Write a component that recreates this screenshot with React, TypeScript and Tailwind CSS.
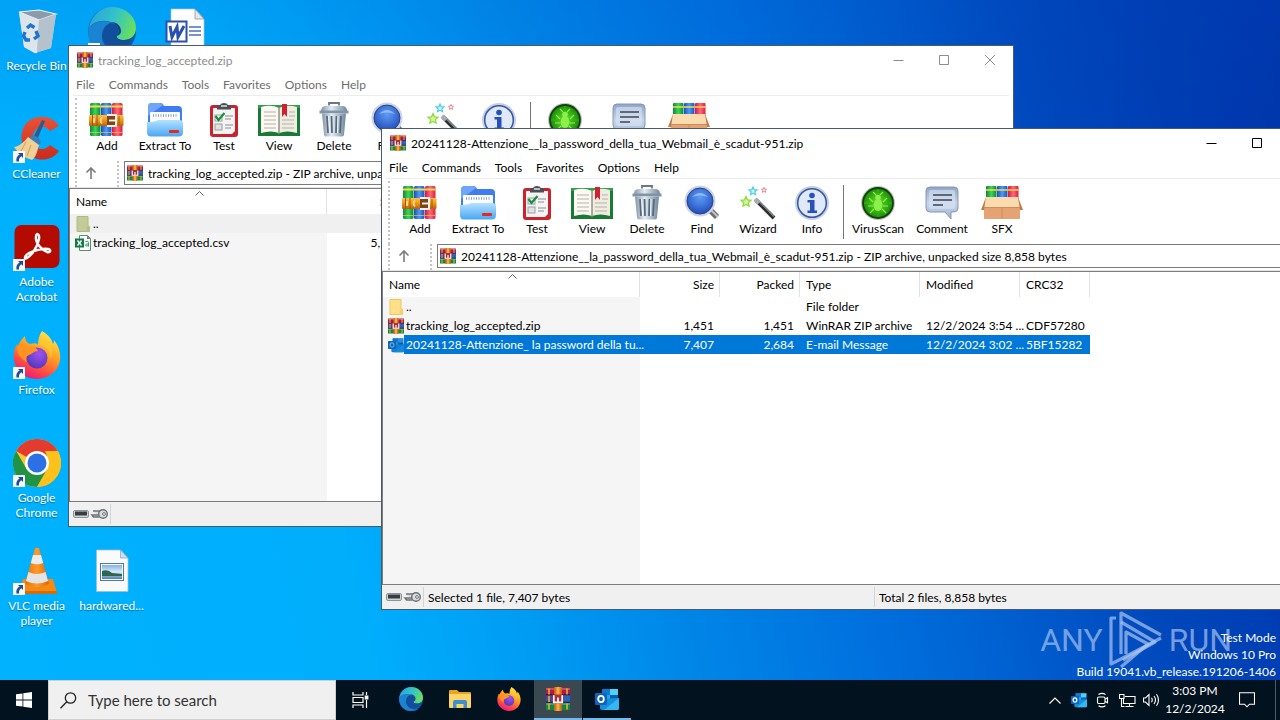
import type { ReactNode } from 'react';
import clsx from 'clsx';

type Row = {
  icon: ReactNode;
  name: string;
  cells: string[];
  state?: 'selected' | 'hover';
};

type ArchiveWindowProps = {
  title: string;
  address: string;
  rows: Row[];
  active?: boolean;
  status?: [string, string];
  className: string;
};

/* ---------- shared gradients ---------- */

function Gradients() {
  return (
    <svg className="absolute h-0 w-0" aria-hidden="true">
      <defs>
        <linearGradient id="green" x1="0" x2="1" y1="0" y2="0">
          <stop offset="0" stopColor="#0a8a3c" />
          <stop offset="0.5" stopColor="#3fd35c" />
          <stop offset="1" stopColor="#0b8a35" />
        </linearGradient>
        <linearGradient id="blue" x1="0" x2="1" y1="0" y2="0">
          <stop offset="0" stopColor="#1c4fb8" />
          <stop offset="0.5" stopColor="#4c9bf5" />
          <stop offset="1" stopColor="#1d51bd" />
        </linearGradient>
        <linearGradient id="red" x1="0" x2="1" y1="0" y2="0">
          <stop offset="0" stopColor="#d01840" />
          <stop offset="0.5" stopColor="#ff6a7c" />
          <stop offset="1" stopColor="#d71f40" />
        </linearGradient>
        <linearGradient id="belt" x1="0" x2="0" y1="0" y2="1">
          <stop offset="0" stopColor="#f9c24a" />
          <stop offset="0.5" stopColor="#ee9415" />
          <stop offset="1" stopColor="#b5620c" />
        </linearGradient>
        <linearGradient id="folder" x1="0" x2="0" y1="0" y2="1">
          <stop offset="0" stopColor="#b5e2ff" />
          <stop offset="1" stopColor="#4aa6f3" />
        </linearGradient>
        <linearGradient id="steel" x1="0" x2="1" y1="0" y2="0">
          <stop offset="0" stopColor="#8395a8" />
          <stop offset="0.4" stopColor="#e4ecf3" />
          <stop offset="1" stopColor="#71879c" />
        </linearGradient>
        <linearGradient id="bubble" x1="0" x2="0" y1="0" y2="1">
          <stop offset="0" stopColor="#8fa5c8" />
          <stop offset="0.5" stopColor="#c7d5ea" />
          <stop offset="1" stopColor="#9fb4d3" />
        </linearGradient>
        <radialGradient id="lens" cx="0.5" cy="0.35" r="0.7">
          <stop offset="0" stopColor="#5f9df5" />
          <stop offset="1" stopColor="#1c48b8" />
        </radialGradient>
        <radialGradient id="virus" cx="0.5" cy="0.5" r="0.5">
          <stop offset="0" stopColor="#6be52c" />
          <stop offset="1" stopColor="#178a08" />
        </radialGradient>
        <linearGradient id="edgeTop" x1="0" x2="1" y1="0.3" y2="0.6">
          <stop offset="0" stopColor="#2aa5dc" />
          <stop offset="0.5" stopColor="#34c3c8" />
          <stop offset="1" stopColor="#6be05a" />
        </linearGradient>
        <linearGradient id="edgeLow" x1="0" x2="1" y1="0" y2="1">
          <stop offset="0" stopColor="#1b86d4" />
          <stop offset="1" stopColor="#0d4f9e" />
        </linearGradient>
        <linearGradient id="fire" x1="0.8" x2="0.3" y1="0" y2="1">
          <stop offset="0" stopColor="#fff04a" />
          <stop offset="0.45" stopColor="#ff9a22" />
          <stop offset="0.75" stopColor="#ff4a45" />
          <stop offset="1" stopColor="#e8177f" />
        </linearGradient>
        <radialGradient id="globe" cx="0.6" cy="0.3" r="0.8">
          <stop offset="0" stopColor="#a24ff0" />
          <stop offset="1" stopColor="#4637b5" />
        </radialGradient>
        <linearGradient id="cone" x1="0" x2="1" y1="0" y2="0">
          <stop offset="0" stopColor="#e86f00" />
          <stop offset="0.5" stopColor="#ff9a2b" />
          <stop offset="1" stopColor="#e06400" />
        </linearGradient>
        <linearGradient id="cc" x1="0" x2="0" y1="0" y2="1">
          <stop offset="0" stopColor="#e85337" />
          <stop offset="1" stopColor="#c92a1c" />
        </linearGradient>
        <linearGradient id="scene" x1="0" x2="0" y1="0" y2="1">
          <stop offset="0" stopColor="#7fb2ec" />
          <stop offset="0.5" stopColor="#dcebf8" />
          <stop offset="1" stopColor="#4d7fb5" />
        </linearGradient>
      </defs>
    </svg>
  );
}

/* ---------- icons ---------- */

function WinRarIcon({ className = 'h-4 w-4' }: { className?: string }) {
  return (
    <svg viewBox="0 0 16 16" className={clsx('shrink-0', className)} aria-hidden="true">
      <path d="M0 .5h16v4.8H0z" fill="#b3193f" />
      <path d="M0 5.3h16v5H0z" fill="#5a3f9e" />
      <path d="M10.500 5.300h5.500v5h-5.500z" fill="#2f62bd" />
      <path d="M0 10.300h16v5.200H0z" fill="#178340" />
      <path d="M0 1.300h16M0 11.300h16" stroke="#fff" strokeOpacity=".3" />
      <path d="M0 5.200h16M0 10.200h16" stroke="#1b1440" strokeWidth=".7" />
      <path d="M2 1v4M2 6v4M2 11v4M14 1v4M14 11v4" stroke="#e9b92f" strokeWidth="1" />
      <path d="M5.500 0h5v16h-5z" fill="#d9761a" />
      <path d="M7 0h2v16H7z" fill="#f6ab42" />
      <path d="M4.300 5h7.400v6H4.300z" fill="#a3343c" />
      <path d="M5.200 5.500v4.700h5.600V5.500M8 7v3" stroke="#fff" strokeWidth="1.100" fill="none" />
    </svg>
  );
}

function Books() {
  return (
    <>
      <rect x="1" y="1" width="10.500" height="33" rx="1.500" fill="url(#green)" />
      <rect x="12" y="1" width="10.500" height="33" rx="1.500" fill="url(#blue)" />
      <rect x="23" y="1" width="10.500" height="33" rx="1.500" fill="url(#red)" />
      <path d="M1 4.500h10.500M12 4.500h10.500M23 4.500h10.500" stroke="#f8d94a" strokeWidth="1.800" />
      <path d="M1 30.500h10.500M12 30.500h10.500M23 30.500h10.500" stroke="#f8d94a" strokeWidth="1" strokeOpacity=".6" />
    </>
  );
}

function AddIcon() {
  return (
    <svg viewBox="0 0 36 36" className="h-9 w-9" aria-hidden="true">
      <Books />
      <rect x="0" y="13" width="34.500" height="11" rx="1" fill="url(#belt)" />
      <path d="M3.500 13v11M8 13v11" stroke="#a4560b" strokeWidth="1" />
      <path d="M5 16v5M13 15.500q-3 3 0 6" stroke="#ffe39a" fill="none" strokeWidth="1.600" />
      <path d="M18 13h9v11h-9" fill="#7d4616" stroke="#f4efe6" strokeWidth="2" />
      <path d="M20 18.500h6" stroke="#fff" strokeWidth="1.800" />
      <path d="M30 14v9" stroke="#a4560b" />
    </svg>
  );
}

function ExtractIcon() {
  return (
    <svg viewBox="0 0 38 36" className="h-9 w-[38px]" aria-hidden="true">
      <path d="M2 5q0-4 4-4h8q3 0 4 3h14q4 0 4 4v18H2z" fill="#3f7cf0" />
      <path d="M2 5q0-4 4-4h8q2 0 3 2L2 14z" fill="#6fa5fa" />
      <rect x="4" y="10" width="30" height="13" rx="1" fill="#fafcff" />
      <path d="M7 13.500h24" stroke="#8ca0b8" strokeWidth="2.500" strokeDasharray="1 1.500" />
      <path d="M1 20q8 0 11-2h21q4 0 4 3v9q0 4.500-4 4.500H5q-4 0-4-4.500z" fill="url(#folder)" />
      <rect x="23" y="28" width="10" height="3" rx="1" fill="#e02c1c" />
    </svg>
  );
}

function TestIcon() {
  return (
    <svg viewBox="0 0 32 36" className="h-9 w-8" aria-hidden="true">
      <rect x="2" y="3" width="28" height="32" rx="3" fill="#c9242e" />
      <path d="M5 6h22v23l-3 3H5z" fill="#f5f4f2" />
      <path d="M9 6q0-3 3-3 1-2 4-2t4 2q3 0 3 3v1.500H9z" fill="#4b5058" />
      <path d="M13 4h6" stroke="#dfe3e8" strokeWidth="1.500" />
      <rect x="7" y="13" width="7" height="6" fill="none" stroke="#9aa0a6" />
      <rect x="7" y="22" width="7" height="6" fill="#e2e2e2" stroke="#9aa0a6" />
      <path d="M7.500 14l3 4 6-7" stroke="#17913c" strokeWidth="2.200" fill="none" />
      <path d="M17 14h8M17 17h6M17 23h8M17 26h6" stroke="#8a8f96" strokeWidth="1.200" />
    </svg>
  );
}

function ViewIcon() {
  return (
    <svg viewBox="0 0 44 36" className="h-9 w-11" aria-hidden="true">
      <path d="M1 3h42v31H1z" fill="#187a35" />
      <path d="M1 3h42v3H1z" fill="#2da04d" />
      <path d="M4 5q10-3 18 1v25q-8-3-18 0z" fill="#fbf9f2" />
      <path d="M40 5q-10-3-18 1v25q8-3 18 0z" fill="#efece2" />
      <path d="M22 5v27" stroke="#8f8a7c" strokeWidth="1.400" />
      <path d="M7 10h12M7 14h12M7 18h12M7 22h12M7 26h12M25 18h12M25 22h12M25 26h12M32 10h6M32 14h6" stroke="#b5b1a8" strokeWidth="1" />
      <path d="M25 2h5v13l-2.500-3-2.500 3z" fill="#d3202e" />
    </svg>
  );
}

function DeleteIcon() {
  return (
    <svg viewBox="0 0 32 36" className="h-9 w-8" aria-hidden="true">
      <path d="M11 3.500V1h10v2.500" stroke="#66788a" strokeWidth="1.800" fill="none" />
      <path d="M3 9q0-5 5-5h16q5 0 5 5z" fill="url(#steel)" />
      <path d="M1.500 8.500h29v3h-29z" fill="#8295a8" />
      <path d="M4 11.500h24l-2 21q0 2-3 2H9q-3 0-3-2z" fill="url(#steel)" />
      <path d="M9 14l1 17M13.500 14l.5 17M18.500 14l-.5 17M23 14l-1 17" stroke="#566a7e" strokeWidth="1.800" />
      <path d="M10.700 14l1 17M20 14l-.5 17" stroke="#f2f7fb" strokeWidth="1" />
    </svg>
  );
}

function FindIcon() {
  return (
    <svg viewBox="0 0 38 36" className="h-9 w-[38px]" aria-hidden="true">
      <path d="M27 25l7 7" stroke="#6b7076" strokeWidth="6" />
      <path d="M26 23l9 9" stroke="#c2c6ca" strokeWidth="1.800" />
      <circle cx="17" cy="16" r="15.500" fill="#ccd4e2" />
      <circle cx="17" cy="16" r="13" fill="url(#lens)" stroke="#2a3f86" strokeWidth="1" />
      <path d="M9 12q8-8 16 0-8-3-16 0z" fill="#a9cbfb" opacity=".7" />
    </svg>
  );
}

function WizardIcon() {
  const star = 'M0-5l1.500 3.300 3.500.4-2.600 2.400.7 3.500L0 2.900l-3.100 1.700.7-3.500L-5-1.300l3.500-.4z';
  return (
    <svg viewBox="0 0 38 36" className="h-9 w-[38px]" aria-hidden="true">
      <path d="M17 15l18 18" stroke="#2c2e32" strokeWidth="4" />
      <path d="M18 14.500l17 17" stroke="#8d9196" strokeWidth="1.200" />
      <path d="M16 14l4 4" stroke="#a9acb0" strokeWidth="4" />
      <path d={star} transform="translate(7 16.500)" fill="#d8f5a0" stroke="#8fdc3c" strokeWidth="1.300" />
      <path d={star} transform="translate(14 6) scale(.8)" fill="#c9f3fb" stroke="#4ccbe8" strokeWidth="1.500" />
      <path d={star} transform="translate(25 5) scale(.5)" fill="#fff" stroke="#ea6a78" strokeWidth="1.700" />
    </svg>
  );
}

function InfoIcon() {
  return (
    <svg viewBox="0 0 36 36" className="h-9 w-9" aria-hidden="true">
      <circle cx="18" cy="18" r="17" fill="#c8d0df" />
      <circle cx="18" cy="18" r="14.300" fill="#dfe9fa" stroke="#3456ab" strokeWidth="1.500" />
      <circle cx="18" cy="10.500" r="2.800" fill="#2550bd" />
      <path d="M13.500 15h7v10.500h2.500v2.500H13.500v-2.500H16v-8h-2.500z" fill="#2550bd" />
    </svg>
  );
}

function VirusIcon() {
  return (
    <svg viewBox="0 0 36 36" className="h-9 w-9" aria-hidden="true">
      <circle cx="18" cy="18" r="17" fill="#b9c1b9" />
      <circle cx="18" cy="18" r="15" fill="url(#virus)" stroke="#14400f" strokeWidth="1.800" />
      <path d="M18 4v28M4 18h28" stroke="#37b51a" strokeWidth="1" />
      <ellipse cx="18" cy="20" rx="4.500" ry="6" fill="#8df04a" />
      <circle cx="18" cy="12.500" r="2.800" fill="#8df04a" />
      <path d="M13 17l-4-4M23 17l4-4M13 21H8M23 21h5M14 24l-4 4M22 24l4 4M16 10l-3-3M20 10l3-3" stroke="#8df04a" strokeWidth="1.200" />
    </svg>
  );
}

function CommentIcon() {
  return (
    <svg viewBox="0 0 36 36" className="h-9 w-9" aria-hidden="true">
      <path d="M6 2h24q4 0 4 4v17q0 4-4 4h-3v7l-6-7H6q-4 0-4-4V6q0-4 4-4z" fill="url(#bubble)" stroke="#8796b2" strokeWidth="1" />
      <rect x="5" y="5" width="26" height="19" rx="2" fill="#dbe5f4" opacity=".6" />
      <path d="M9 10h19M9 15h19M9 20h10" stroke="#3c4656" strokeWidth="1.600" />
    </svg>
  );
}

function SfxIcon() {
  return (
    <svg viewBox="0 0 42 36" className="h-9 w-[42px]" aria-hidden="true">
      <rect x="5" y="1" width="10.500" height="16" rx="1" fill="url(#green)" />
      <rect x="16" y="1" width="10.500" height="16" rx="1" fill="url(#blue)" />
      <rect x="27" y="1" width="10.500" height="16" rx="1" fill="url(#red)" />
      <path d="M5 5h10.500M16 5h10.500M27 5h10.500" stroke="#f8d94a" strokeWidth="1.600" />
      <path d="M3 22h36v12H3z" fill="#e5a273" />
      <path d="M5 12h32l2 10H3z" fill="#fbdcae" />
      <path d="M5 12L0 25h3zM37 12l5 13h-3z" fill="#c27a4a" />
      <path d="M3 22.500h36M21 22v12" stroke="#cf8c5c" strokeWidth="1" />
    </svg>
  );
}

function FolderIcon({ faded }: { faded?: boolean }) {
  return (
    <svg viewBox="0 0 16 16" className="h-4 w-4 shrink-0" aria-hidden="true">
      <path d="M2 .5h11v9l1.500 1v5H2z" fill={faded ? '#c3cc97' : '#ffe08a'} stroke={faded ? '#b0b983' : '#efc65c'} />
      <path d="M11.500 15.500v-5h3v5z" fill={faded ? '#b5c08c' : '#fbd063'} />
    </svg>
  );
}

function CsvIcon() {
  return (
    <svg viewBox="0 0 16 16" className="h-4 w-4 shrink-0" aria-hidden="true">
      <path d="M4.500.5h8l3 3v12h-11z" fill="#fff" stroke="#5b8f72" />
      <path d="M12 .5v3.500h3.500z" fill="#777" />
      <rect x="0" y="3.500" width="9" height="9" fill="#107c41" />
      <path d="M2.500 5.500l4 5M6.500 5.500l-4 5" stroke="#fff" strokeWidth="1.400" />
      <path d="M10.500 6.500q3-1 3 1v4m0-2.500q-3-.3-3 1.200t3 .5" stroke="#21a366" strokeWidth="1" fill="none" />
    </svg>
  );
}

function OutlookIcon({ className, dim }: { className: string; dim?: boolean }) {
  return (
    <svg viewBox="0 0 24 24" className={clsx('shrink-0', className)} aria-hidden="true">
      <path d="M7 2h16v12H7z" fill={dim ? '#2392dd' : '#28a8ea'} />
      <path d="M7 2h8v6H7z" fill="#0f78d4" />
      <path d="M15 8h8v6h-8z" fill="#0a5cae" />
      <path d="M15 2h8v6h-8z" fill={dim ? '#2a90dc' : '#50d0f5'} />
      <path d="M5 12l19-1v10q0 2-2 2H7q-2 0-2-2z" fill={dim ? '#0f80d8' : '#1490df'} />
      <path d="M24 11v10q0 2-2 2H9z" fill={dim ? '#1a88da' : '#35b8f1'} />
      <rect x="0" y="6" width="12" height="12" rx="1" fill="#0f64b8" />
      <ellipse cx="6" cy="12" rx="2.800" ry="3.200" fill="none" stroke={dim ? '#5aa8e8' : '#fff'} strokeWidth="1.800" />
    </svg>
  );
}

function DriveKeyIcon() {
  return (
    <svg viewBox="0 0 36 14" className="h-[14px] w-9" aria-hidden="true">
      <rect x=".5" y="3.500" width="15" height="7" rx="1.500" fill="#cfd3d6" stroke="#8d9499" />
      <rect x="2" y="4.500" width="12" height="4" fill="#363c42" />
      <path d="M20 4h8v4h-9l1.500 2h6" stroke="#6d7276" strokeWidth="1.500" fill="#d9dcde" />
      <circle cx="30" cy="7" r="4.300" fill="#d9dcde" stroke="#6d7276" strokeWidth="1.400" />
      <circle cx="31" cy="7" r="1.400" fill="#fff" stroke="#6d7276" />
    </svg>
  );
}

function EdgeIcon({ className }: { className: string }) {
  return (
    <svg viewBox="0 0 48 48" className={className} aria-hidden="true">
      <circle cx="24" cy="24" r="24" fill="url(#edgeLow)" />
      <path d="M1 21C4 7 14 0 24 0c14 0 24 10 24 21 0 8-6 12-12 12-5 0-8-2-7-4 3-4 2-12-6-14C14 12 4 15 1 21z" fill="url(#edgeTop)" />
      <path d="M1 22c4-7 15-10 22-6-6 1-10 7-9 14 1 9 8 15 17 15 4 0 8-1 11-4-4 5-11 7-18 7C10 48-1 37 1 22z" fill="#1a84d3" />
      <path d="M14 30c0-7 4-13 9-14 8 2 9 9 6 13-1 2 2 4 7 4 3 0 6-1 8-2-4 9-12 13-20 11-6-2-10-7-10-12z" fill="#114f9c" />
      <path d="M29 29c3-4 2-11-6-14 6 0 10 4 10 9 0 3-2 4-4 5z" fill="#0e3f84" />
    </svg>
  );
}

function FirefoxIcon({ className }: { className: string }) {
  return (
    <svg viewBox="0 0 48 48" className={className} aria-hidden="true">
      <path d="M29 0c8 5 10 9 11 13 1-1 1-3 1-4 9 11 8 25-1 33-9 8-24 8-33-1C-2 32 0 19 4 13c0 2 1 3 1 3C6 11 9 8 12 5c0 4 2 7 5 8 4-1 7-1 8 1 0-5 1-10 4-14z" fill="url(#fire)" />
      <circle cx="24" cy="27" r="10.500" fill="url(#globe)" />
      <path d="M4 15c4-2 8-2 11 1 4-1 9 0 10 4-4 0-6 3-9 4-3 1-4 4-2 7-6-3-10-8-10-16z" fill="#ff9420" />
      <path d="M25 14c8 0 13 7 12 14 5-8 1-18-6-20-3-2-5 2-6 6z" fill="#ffcb2e" opacity=".7" />
    </svg>
  );
}

function ChromeIcon() {
  return (
    <svg viewBox="0 0 48 48" className="h-12 w-12" aria-hidden="true">
      <circle cx="24" cy="24" r="24" fill="#fcc934" />
      <path d="M24 24L3.200 12A24 24 0 0 1 44.800 12z" fill="#e33b2e" />
      <path d="M24 12h20.800L24 24z" fill="#e33b2e" />
      <path d="M3.200 12A24 24 0 0 0 24 48l10.400-18L24 24l-10.400 6z" fill="#229342" />
      <path d="M44.800 12A24 24 0 0 1 24 48l10.400-18A12 12 0 0 0 34.400 18L32 12z" fill="#fcc21b" />
      <circle cx="24" cy="24" r="12" fill="#fff" />
      <circle cx="24" cy="24" r="9.500" fill="#2b70e4" />
    </svg>
  );
}

function RecycleIcon() {
  return (
    <svg viewBox="0 0 48 48" className="h-12 w-12" aria-hidden="true">
      <path d="M6 5l20-2 17 4-5 34-16 5-11-6z" fill="#c3d0da" />
      <path d="M6 5l20-2 17 4-17 6z" fill="#8a9cab" stroke="#eef3f6" strokeWidth="1.200" />
      <path d="M6 5l20 8-2 33-2 .2-11-6.200z" fill="#dde5eb" />
      <path d="M26 13l17-6-5 34-14 4.500z" fill="#b4c2cd" />
      <path d="M14 21l3.500-3 4 2.500M23 24l2 5-4 3M17 33h-4l-2.500-4 1.500-4" stroke="#1a74d2" strokeWidth="3.400" fill="none" />
    </svg>
  );
}

function CCleanerIcon() {
  return (
    <svg viewBox="0 0 48 48" className="h-12 w-12" aria-hidden="true">
      <path d="M46 11C38-1 20-1 12 10 4 22 10 40 24 44c9 2 17-1 22-8l-9-6c-5 6-13 5-16-1-3-7 0-15 6-17 4-1 7 0 10 4z" fill="url(#cc)" />
      <path d="M29 5l3 1-8 19-4-2z" fill="#2a5b8e" />
      <path d="M19 20q8 1 9 8l-5 4-9-6z" fill="#3a7fb8" />
      <path d="M15 22l11 8c-2 6-2 11-7 15C12 43 5 38 1 32c6-1 10-5 14-10z" fill="#f0cf98" />
      <path d="M13 27l-5 9M18 30l-4 11" stroke="#d4a861" strokeWidth="1.200" />
    </svg>
  );
}

function AcrobatIcon() {
  return (
    <svg viewBox="0 0 48 48" className="h-12 w-12" aria-hidden="true">
      <rect x="1.500" y="2" width="45" height="43" rx="7" fill="#b30b00" />
      <path d="M14 35c-3 2-3-2 2-5 4-2 14-5 19-4 4 1 2 4-1 3-5-2-12-9-11-15 0-5 4-3 3 2-1 7-7 16-12 19z" fill="none" stroke="#fff" strokeWidth="2.400" strokeLinejoin="round" />
    </svg>
  );
}

function VlcIcon() {
  return (
    <svg viewBox="0 0 48 48" className="h-12 w-12" aria-hidden="true">
      <path d="M10 32h30l4 14H6z" fill="#f58a12" />
      <path d="M6 44h38v3H6z" fill="#d76c04" />
      <path d="M22 1h4l10 36q-12 6-24 0z" fill="url(#cone)" />
      <path d="M20 8h8l2.200 8q-6 2.500-12.400 0z" fill="#ececec" />
      <path d="M15.500 25q8.500 4 17 0l2.500 9q-11 5-22 0z" fill="#e4e4e4" />
    </svg>
  );
}

function WordDocIcon() {
  return (
    <svg viewBox="0 0 48 48" className="h-12 w-12" aria-hidden="true">
      <path d="M8 2h24l9 10v36H8z" fill="#fdfdfd" stroke="#a9c1d8" strokeWidth=".7" />
      <path d="M32 2v10h9z" fill="#e3e8ee" stroke="#888" strokeWidth=".7" />
      <path d="M26 20h12M26 24h12M26 28h12" stroke="#4a6fc0" strokeWidth="1.300" />
      <rect x="3.500" y="14.500" width="20" height="20" fill="#fff" stroke="#2a50ae" strokeWidth="2" />
      <path d="M7 19l2 11 5-10 1 10 6-11" stroke="#2a50ae" strokeWidth="3" fill="none" />
    </svg>
  );
}

function ImageFileIcon() {
  return (
    <svg viewBox="0 0 48 48" className="h-12 w-12" aria-hidden="true">
      <path d="M8.500 3h24l7.500 8v33.500H8.500z" fill="#fafafa" stroke="#a3bccd" strokeWidth=".8" />
      <path d="M32.500 3v8H40z" fill="#cfe0ec" stroke="#8fa9bb" strokeWidth=".8" />
      <rect x="12.500" y="16.500" width="23" height="17" fill="#fff" stroke="#4b79a8" />
      <rect x="14" y="18" width="20" height="14" fill="url(#scene)" />
      <path d="M14 24q6-2 10 2l10 1v2H14z" fill="#2f6650" />
    </svg>
  );
}

function ShortcutArrow() {
  return (
    <svg viewBox="0 0 12 12" className="absolute bottom-0 left-0 h-3 w-3" aria-hidden="true">
      <rect width="12" height="12" fill="#f6f8fb" />
      <path d="M5 2h5v5L8.300 5.300Q5.500 7 6 10.500H3.500Q2.500 6 6.600 3.600z" fill="#1f4b9b" />
    </svg>
  );
}

/* ---------- archive window ---------- */

const menus = ['File', 'Commands', 'Tools', 'Favorites', 'Options', 'Help'];

const tools = [
  { label: 'Add', icon: <AddIcon />, width: 'w-[58px]' },
  { label: 'Extract To', icon: <ExtractIcon />, width: 'w-[58px]' },
  { label: 'Test', icon: <TestIcon />, width: 'w-[60px]' },
  { label: 'View', icon: <ViewIcon />, width: 'w-[50px]' },
  { label: 'Delete', icon: <DeleteIcon />, width: 'w-[60px]' },
  { label: 'Find', icon: <FindIcon />, width: 'w-[50px]' },
  { label: 'Wizard', icon: <WizardIcon />, width: 'w-[62px]' },
  { label: 'Info', icon: <InfoIcon />, width: 'w-[46px]' },
];

const extraTools = [
  { label: 'VirusScan', icon: <VirusIcon />, width: 'w-[52px]' },
  { label: 'Comment', icon: <CommentIcon />, width: 'w-[76px]' },
  { label: 'SFX', icon: <SfxIcon />, width: 'w-[44px]' },
];

const columns = [
  { label: 'Name', width: 'w-[257px]', align: 'text-left' },
  { label: 'Size', width: 'w-[80px]', align: 'text-right' },
  { label: 'Packed', width: 'w-[80px]', align: 'text-right' },
  { label: 'Type', width: 'w-[120px]', align: 'text-left' },
  { label: 'Modified', width: 'w-[100px]', align: 'text-left' },
  { label: 'CRC32', width: 'w-[70px]', align: 'text-left' },
];

function ToolButton({ label, icon, width }: { label: string; icon: ReactNode; width: string }) {
  return (
    <button className={clsx('flex shrink-0 flex-col items-center', width)}>
      {icon}
      <span className="whitespace-nowrap leading-4">{label}</span>
    </button>
  );
}

function ArchiveWindow({ title, address, rows, active, status, className }: ArchiveWindowProps) {
  return (
    <section
      aria-label={title}
      className={clsx('absolute flex h-[482px] w-[946px] flex-col border border-[#4a5a68] bg-white text-black', className)}
    >
      <header className="flex h-7 shrink-0 items-center pl-2">
        <WinRarIcon />
        <h2 className={clsx('ml-[5px] flex-1 whitespace-nowrap', !active && 'text-[#8c8c8c]')}>{title}</h2>
        <div className={clsx('flex h-full', active ? 'text-black' : 'text-[#8c8c8c]')}>
          {[
            { label: 'Minimize', d: 'M.5 5.500h10' },
            { label: 'Maximize', d: 'M.5.5h9v9h-9z' },
            { label: 'Close', d: 'M0 0l10 10M10 0L0 10' },
          ].map((b) => (
            <button key={b.label} aria-label={b.label} className="flex w-[46px] items-center justify-center">
              <svg viewBox="0 0 11 11" className="h-[11px] w-[11px]" fill="none" stroke="currentColor">
                <path d={b.d} />
              </svg>
            </button>
          ))}
        </div>
      </header>

      <nav className={clsx('flex h-[21px] shrink-0 items-end', !active && 'text-[#6d6d6d]')}>
        {menus.map((m) => (
          <button key={m} className="px-[7px] leading-5">
            {m}
          </button>
        ))}
      </nav>

      <div className="mx-1 flex h-[66px] shrink-0 border-t border-[#ececec] pt-[6px]">
        <div className="-mt-1 ml-0.5 mr-px border-l-2 border-dotted border-[#c4c4c4]" />
        {tools.map((t) => (
          <ToolButton key={t.label} {...t} />
        ))}
        <div className="mx-2 h-[54px] w-px bg-[#777]" />
        {extraTools.map((t) => (
          <ToolButton key={t.label} {...t} />
        ))}
      </div>

      <div className="flex h-[27px] shrink-0 items-start border-b border-[#e3e3e3] pl-1.5">
        <div className="h-[26px] border-l-2 border-dotted border-[#c4c4c4]" />
        <button aria-label="Up one level" className="mr-[14px] flex h-6 w-[26px] items-center justify-end">
          <svg viewBox="0 0 12 12" className="mr-1.5 h-3 w-3" fill="none" stroke="#7b7b7b" strokeWidth="1.600">
            <path d="M6 12V1M1.500 5.500L6 1l4.500 4.500" />
          </svg>
        </button>
        <div className="h-[26px] border-l-2 border-dotted border-[#c4c4c4]" />
        <div className="ml-[5px] flex h-6 flex-1 items-center border border-[#7a7a7a] pl-0.5">
          <WinRarIcon />
          <input
            aria-label="Address"
            readOnly
            value={address}
            className="ml-[5px] h-5 min-w-0 flex-1 bg-transparent outline-none"
          />
        </div>
      </div>

      <div className="min-h-0 flex-1 border-b border-l border-t border-[#7d7d7d] bg-[linear-gradient(to_right,#f5f5f5_257px,white_257px)]">
        <table className="w-[707px] table-fixed border-separate border-spacing-0 whitespace-nowrap">
          <thead>
            <tr className="h-[25px] bg-white">
              {columns.map((c) => (
                <th
                  key={c.label}
                  className={clsx('relative border-r border-[#e2e2e2] p-0 font-normal', c.width, c.align, c.align === 'text-right' ? 'pr-[5px]' : 'pl-1.5')}
                >
                  {c.label}
                  {c.label === 'Name' && (
                    <svg viewBox="0 0 9 5" className="absolute left-[125px] top-[2px] h-[5px] w-[9px]" fill="none" stroke="#666">
                      <path d="M.5 4.500l4-4 4 4" />
                    </svg>
                  )}
                </th>
              ))}
            </tr>
          </thead>
          <tbody>
            {rows.map((r) => (
              <tr
                key={r.name}
                className={clsx('h-[19px]', r.state === 'selected' && 'bg-[#0078d7] text-white', r.state === 'hover' && 'bg-[#f0f0f0]')}
              >
                <td className="p-0">
                  <div className="flex h-[19px] items-center">
                    <span className={clsx('flex h-[19px] items-center pl-[5px]', r.state === 'selected' && 'bg-[#f5f5f5]')}>
                      {r.icon}
                    </span>
                    <span className="pl-0.5">{r.name}</span>
                  </div>
                </td>
                {columns.slice(1).map((c, i) => (
                  <td key={c.label} className={clsx('p-0', c.align, c.align === 'text-right' ? 'pr-1.5' : 'pl-1.5')}>
                    {r.cells[i]}
                  </td>
                ))}
              </tr>
            ))}
          </tbody>
        </table>
      </div>

      <footer className="flex h-6 shrink-0 items-center bg-[#f0f0f0] pl-1">
        <DriveKeyIcon />
        <span className="ml-px h-5 w-px bg-[#d4d4d4]" />
        <span className="w-[450px] pl-1">{status?.[0]}</span>
        {status && <span className="h-5 w-px bg-[#d4d4d4]" />}
        <span className="pl-1">{status?.[1]}</span>
      </footer>
    </section>
  );
}

/* ---------- desktop ---------- */

const shortcuts = [
  { label: 'Recycle Bin', icon: <RecycleIcon />, place: 'col-start-1 row-start-1' },
  { label: 'CCleaner', icon: <CCleanerIcon />, place: 'col-start-1 row-start-2', link: true },
  { label: 'Adobe Acrobat', icon: <AcrobatIcon />, place: 'col-start-1 row-start-3', link: true },
  { label: 'Firefox', icon: <FirefoxIcon className="h-12 w-12" />, place: 'col-start-1 row-start-4', link: true },
  { label: 'Google Chrome', icon: <ChromeIcon />, place: 'col-start-1 row-start-5', link: true },
  { label: 'VLC media player', icon: <VlcIcon />, place: 'col-start-1 row-start-6', link: true },
  { label: '', icon: <EdgeIcon className="h-12 w-12" />, place: 'col-start-2 row-start-1', link: true },
  { label: 'hardwared...', icon: <ImageFileIcon />, place: 'col-start-2 row-start-6' },
  { label: '', icon: <WordDocIcon />, place: 'col-start-3 row-start-1' },
];

function Watermark() {
  return (
    <div className="absolute bottom-[10px] right-12 flex items-center gap-1.5 font-['Roboto',sans-serif] text-[32px] leading-none text-[#a9c4f0]/70">
      <span>ANY</span>
      <svg viewBox="0 0 54 60" className="h-[60px] w-[54px]" fill="none" stroke="currentColor" strokeWidth="3.200" strokeLinejoin="round">
        <path d="M12 44V3l40 22" />
        <path d="M7 8H2v46l10-5 40-21" />
        <path d="M12 12l34 20-32 18" />
        <path d="M17 44V22l22 12L12 57" />
      </svg>
      <span>RUN</span>
    </div>
  );
}

/* ---------- taskbar ---------- */

function TaskButton({ label, children, open, active }: { label: string; children: ReactNode; open?: boolean; active?: boolean }) {
  return (
    <button
      aria-label={label}
      className={clsx('flex h-10 w-12 items-center justify-center border-b-2', active && 'bg-[#3a4852]', open ? 'border-[#76b9ed]' : 'border-transparent')}
    >
      {children}
    </button>
  );
}

function Taskbar() {
  return (
    <footer className="relative flex h-10 shrink-0 bg-[#02121f] text-white">
      <button aria-label="Start" className="flex w-12 items-center justify-center">
        <svg viewBox="0 0 16 16" className="h-4 w-4" fill="#fff">
          <path d="M0 2.300l6.500-.9v6.200H0zM7.300 1.300L16 0v7.600H7.300zM0 8.400h6.500v6.200L0 13.700zM7.300 8.400H16V16l-8.700-1.200z" />
        </svg>
      </button>
      <label className="flex w-[288px] items-center border border-[#d0d0d0] bg-[#f0f0f0] pl-[11px]">
        <svg viewBox="0 0 17 17" className="h-[17px] w-[17px]" fill="none" stroke="#222" strokeWidth="1.300">
          <circle cx="10.500" cy="6" r="5.200" />
          <path d="M6.800 9.800L.5 16.300" />
        </svg>
        <input
          aria-label="Search"
          placeholder="Type here to search"
          className="ml-[11px] h-6 min-w-0 flex-1 bg-transparent text-[15px] outline-none placeholder:text-[#333]"
        />
      </label>
      <button aria-label="Task view" className="mr-[3px] flex w-12 items-center justify-center">
        <svg viewBox="0 0 18 16" className="h-4 w-[18px]" fill="none" stroke="#fff" strokeWidth="1.200">
          <path d="M2 0v3h10V0M2 16v-3h10v3M2 5.500h10v5H2zM15.500 0v3M15.500 8v8" />
          <path d="M14.300 4h2.500v3h-2.500z" fill="#fff" />
        </svg>
      </button>
      <div className="flex gap-px">
        <TaskButton label="Microsoft Edge">
          <EdgeIcon className="h-6 w-6" />
        </TaskButton>
        <TaskButton label="File Explorer">
          <svg viewBox="0 0 24 24" className="h-6 w-6">
            <path d="M1 4q0-1 1-1h7l2 2h11q1 0 1 1v14H1z" fill="#e8a520" />
            <path d="M1 7h22v13q0 1-1 1H2q-1 0-1-1z" fill="#fdd566" />
            <path d="M5 21v-6q0-2 2-2h10q2 0 2 2v6h-3.500v-4h-7v4z" fill="#3c8fd4" />
          </svg>
        </TaskButton>
        <TaskButton label="Firefox">
          <FirefoxIcon className="h-6 w-6" />
        </TaskButton>
        <TaskButton label="WinRAR" open active>
          <WinRarIcon className="h-6 w-6" />
        </TaskButton>
        <TaskButton label="Outlook" open>
          <OutlookIcon className="h-6 w-6" />
        </TaskButton>
      </div>

      <div className="ml-auto flex items-center">
        <div className="flex items-center">
          <button aria-label="Show hidden icons" className="flex w-6 justify-center">
            <svg viewBox="0 0 12 7" className="h-[7px] w-3" fill="none" stroke="#fff" strokeWidth="1.200">
              <path d="M.5 6.500L6 1l5.500 5.500" />
            </svg>
          </button>
          <button aria-label="Outlook" className="flex w-6 justify-center">
            <OutlookIcon className="h-4 w-4" />
          </button>
          <button aria-label="Meet now" className="flex w-6 justify-center">
            <svg viewBox="0 0 14 16" className="h-4 w-[14px]" fill="none" stroke="#fff" strokeWidth="1.100">
              <rect x="1.500" y="5" width="7.500" height="6.500" rx="1.200" />
              <path d="M9 7.300l2.500-1.500v5L9 9.300M2.500 2.500Q6 .3 9.500 2.500M2.500 13.800Q6 16 9.500 13.800" />
            </svg>
          </button>
          <button aria-label="Network" className="flex w-6 justify-center">
            <svg viewBox="0 0 17 15" className="h-[15px] w-[17px]" fill="none" stroke="#fff" strokeWidth="1.100">
              <path d="M6 3.500h10v7H4.500V5.500M10.500 10.500v3M6.500 13.500h8M.5 1.500h4.500v4H.5zM2.500 5.500v8h3" />
            </svg>
          </button>
          <button aria-label="Volume" className="flex w-6 justify-center">
            <svg viewBox="0 0 17 14" className="h-[14px] w-[17px]" fill="none" stroke="#fff" strokeWidth="1.100">
              <path d="M.5 5h2L6 1.500v11L2.500 9h-2zM8.500 4.800q1.500 2.200 0 4.400M11 3q3 4 0 8M13.500 1.300q4 5.700 0 11.400" />
            </svg>
          </button>
        </div>
        <time className="w-16 text-center leading-[18px]">
          3:03 PM
          <br />
          12/2/2024
        </time>
        <button aria-label="Notifications" className="flex w-10 justify-center">
          <svg viewBox="0 0 16 16" className="h-4 w-4" fill="none" stroke="#fff" strokeWidth="1.100">
            <path d="M.5.700h15v11.500h-5L8 14.800l-2.500-2.600h-5z" />
          </svg>
        </button>
        <span className="mr-1 ml-2 h-10 w-px bg-[#4d5a65]" />
      </div>
    </footer>
  );
}

export default function App() {
  return (
    <div className="flex h-screen flex-col overflow-hidden font-['Lato','Open_Sans',sans-serif] text-[12px] leading-[15px]">
      <Gradients />
      <main className="relative min-h-0 flex-1 overflow-hidden bg-[linear-gradient(to_bottom,rgba(0,80,200,0.14),transparent_25%),linear-gradient(76deg,#00b2ff_0%,#00aefc_26%,#009cf4_37%,#0088e8_47%,#0070de_61%,#0062d2_69%,#0048bc_81%,#003cb2_90%,#0034aa_100%)]">
        <div className="-ml-px grid auto-rows-[108px] grid-cols-[75px_75px_75px] text-white">
          {shortcuts.map((s) => (
            <button key={s.place} className={clsx('flex flex-col items-center px-1 pt-[7px]', s.place)}>
              <span className="relative">
                {s.icon}
                {s.link && <ShortcutArrow />}
              </span>
              <span className="mt-[3px] text-center [text-shadow:0_1px_1px_rgba(0,0,0,0.4)]">{s.label}</span>
            </button>
          ))}
        </div>

        <Watermark />
        <p className="absolute bottom-0 right-1 text-right leading-[17px] text-white">
          Test Mode
          <br />
          Windows 10 Pro
          <br />
          Build 19041.vb_release.191206-1406
        </p>

        <ArchiveWindow
          className="left-[68px] top-[45px]"
          title="tracking_log_accepted.zip"
          address="tracking_log_accepted.zip - ZIP archive, unpacked size"
          rows={[
            { icon: <FolderIcon faded />, name: '..', cells: [], state: 'hover' },
            { icon: <CsvIcon />, name: 'tracking_log_accepted.csv', cells: ['5,120'] },
          ]}
        />
        <ArchiveWindow
          active
          className="left-[381px] top-[128px]"
          title="20241128-Attenzione__la_password_della_tua_Webmail_è_scadut-951.zip"
          address="20241128-Attenzione__la_password_della_tua_Webmail_è_scadut-951.zip - ZIP archive, unpacked size 8,858 bytes"
          rows={[
            { icon: <FolderIcon />, name: '..', cells: ['', '', 'File folder'] },
            {
              icon: <WinRarIcon />,
              name: 'tracking_log_accepted.zip',
              cells: ['1,451', '1,451', 'WinRAR ZIP archive', '12/2/2024 3:54 ...', 'CDF57280'],
            },
            {
              icon: <OutlookIcon className="h-4 w-4" dim />,
              name: '20241128-Attenzione_ la password della tu...',
              cells: ['7,407', '2,684', 'E-mail Message', '12/2/2024 3:02 ...', '5BF15282'],
              state: 'selected',
            },
          ]}
          status={['Selected 1 file, 7,407 bytes', 'Total 2 files, 8,858 bytes']}
        />
      </main>
      <Taskbar />
    </div>
  );
}
